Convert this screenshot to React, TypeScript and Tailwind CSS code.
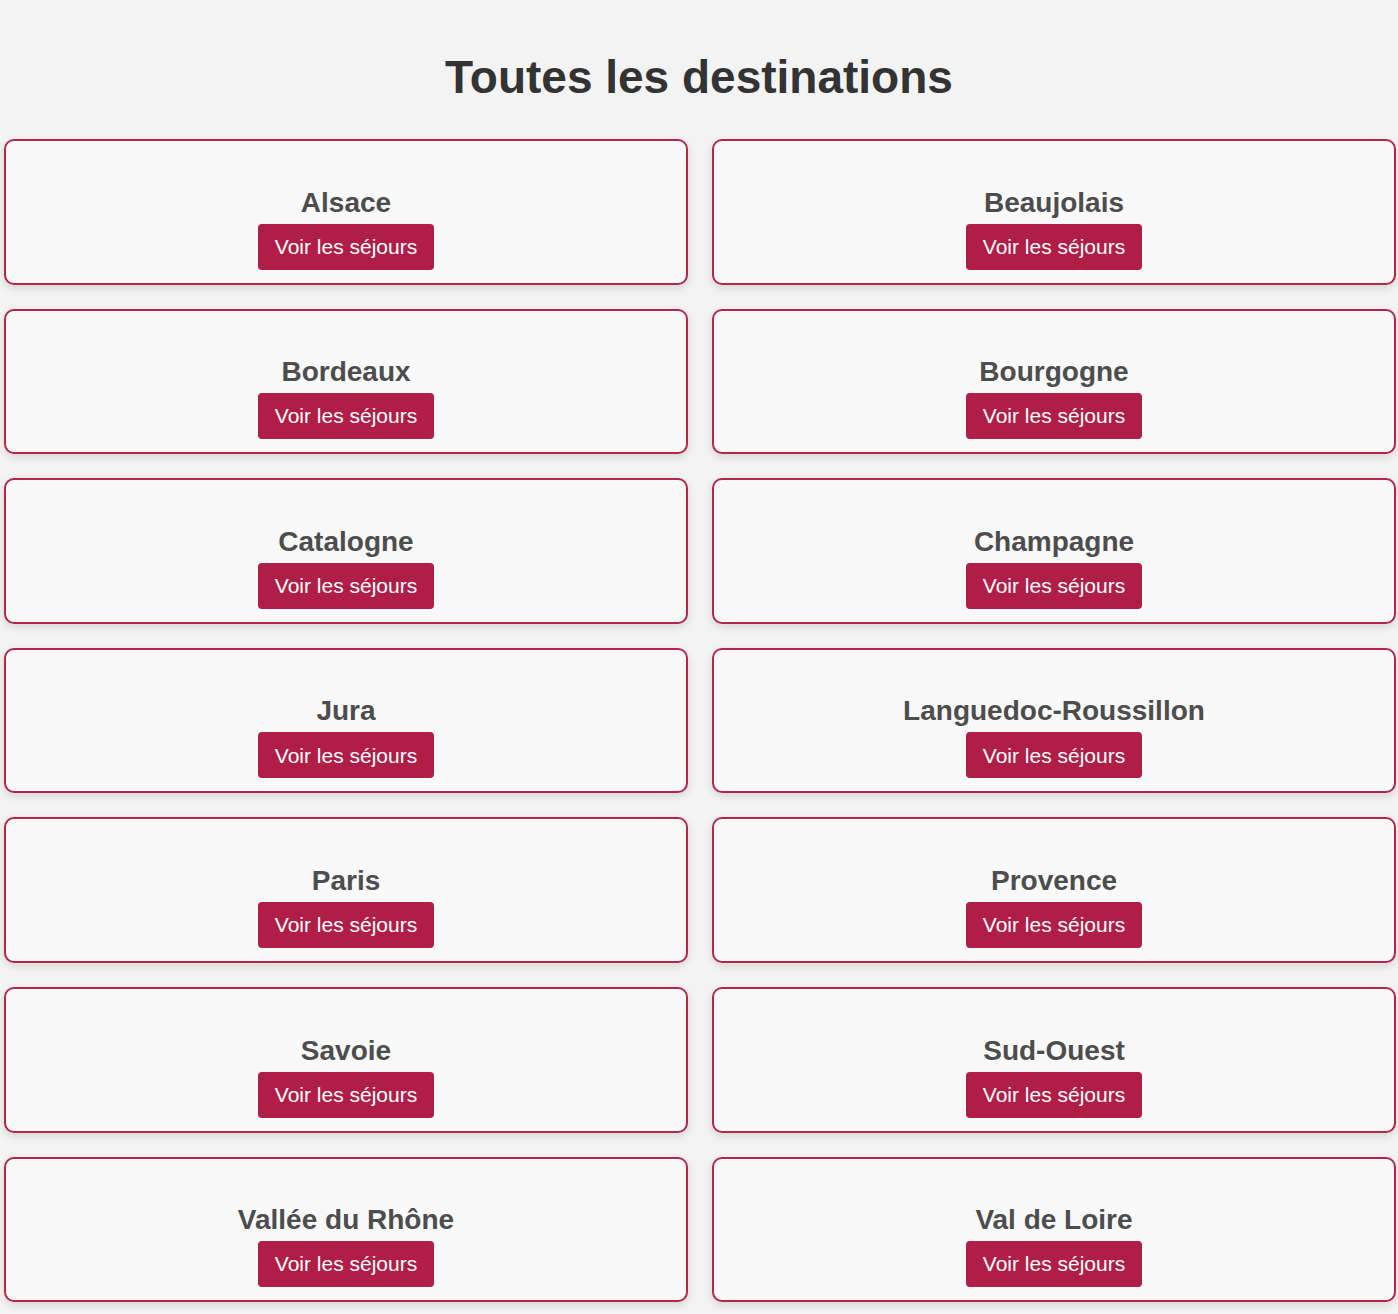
import React from "react";

const destinations = [
  "Alsace",
  "Beaujolais",
  "Bordeaux",
  "Bourgogne",
  "Catalogne",
  "Champagne",
  "Jura",
  "Languedoc-Roussillon",
  "Paris",
  "Provence",
  "Savoie",
  "Sud-Ouest",
  "Vallée du Rhône",
  "Val de Loire",
];

function DestinationCard({ name }: { name: string }) {
  return (
    <div className="flex h-[145.6px] flex-col items-center justify-end rounded-[10px] border-2 border-[#b3274f] bg-[#f9f9f9] pb-[13px] shadow-[0_3px_8px_rgba(0,0,0,0.12)]">
      <h2 className="text-[28px] font-bold leading-[30px] text-[#4d4d4d]">{name}</h2>
      <button className="mt-[6px] h-[46px] rounded-[4px] bg-[#b01e48] px-[17px] text-[21px] text-white">
        Voir les séjours
      </button>
    </div>
  );
}

export default function App() {
  return (
    <div className="min-h-[1314px] bg-[#f3f3f3] font-['Liberation_Sans',Arial,sans-serif]">
      <h1 className="pt-[49px] pb-[34px] text-center text-[46px] font-bold leading-[56px] text-[#333]">
        Toutes les destinations
      </h1>
      <div className="grid grid-cols-2 gap-x-[24px] gap-y-[24px] pl-[4px] pr-[2px]">
        {destinations.map((d) => (
          <DestinationCard key={d} name={d} />
        ))}
      </div>
    </div>
  );
}
